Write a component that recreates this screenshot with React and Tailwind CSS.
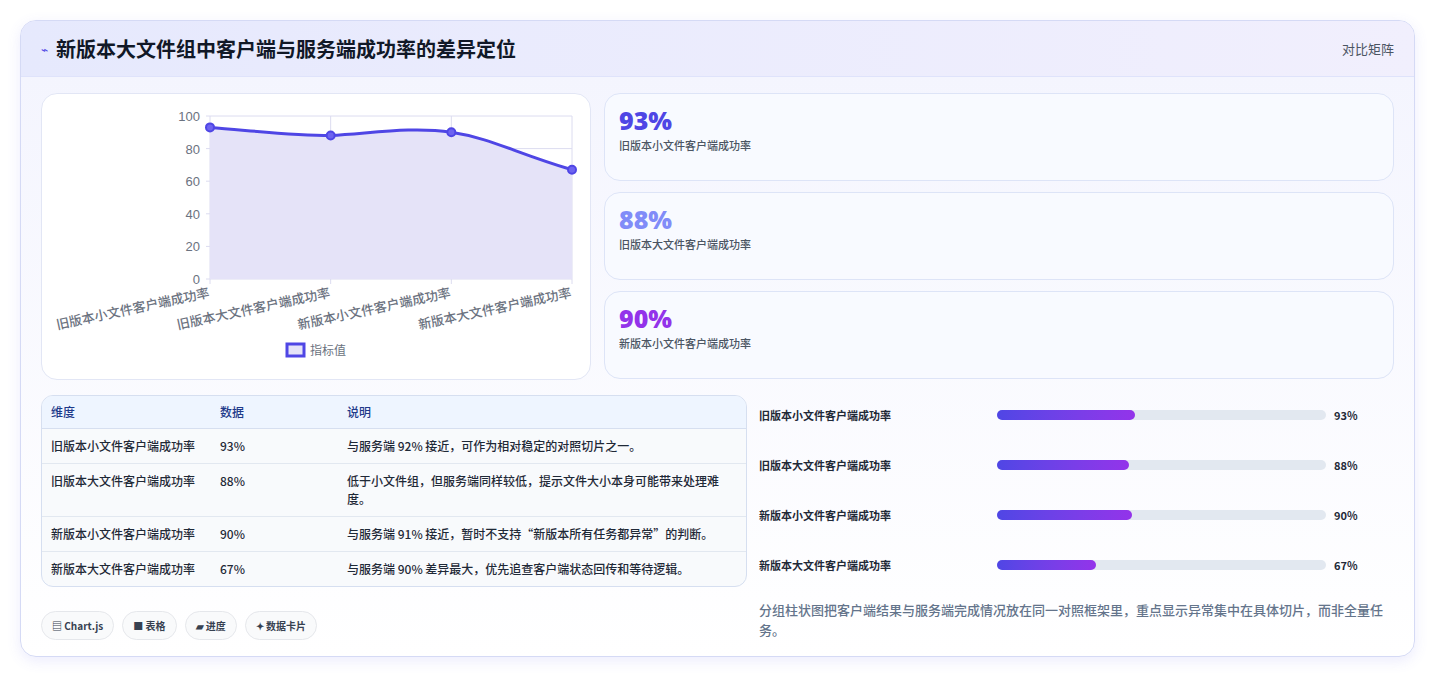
import React from "react";

const items = [
  { name: "旧版本小文件客户端成功率", v: 93, w: 42, color: "text-[#4f46e5]", note: "与服务端 92% 接近，可作为相对稳定的对照切片之一。" },
  { name: "旧版本大文件客户端成功率", v: 88, w: 40, color: "text-[#818cf8]", note: "低于小文件组，但服务端同样较低，提示文件大小本身可能带来处理难度。" },
  { name: "新版本小文件客户端成功率", v: 90, w: 41, color: "text-[#9333ea]", note: "与服务端 91% 接近，暂时不支持“新版本所有任务都异常”的判断。" },
  { name: "新版本大文件客户端成功率", v: 67, w: 30, color: "", note: "与服务端 90% 差异最大，优先追查客户端状态回传和等待逻辑。" },
];

function Chart() {
  const x0 = 168, x1 = 530, y0 = 22, y1 = 185;
  const xs = [0, 1, 2, 3].map((i) => x0 + ((x1 - x0) * i) / 3);
  const y = (v) => y1 - ((y1 - y0) * v) / 100;
  const pts = items.map((it, i) => [xs[i], y(it.v)]);
  const line = `M${pts[0][0]},${pts[0][1]} C${pts[0][0] + 40},${pts[0][1] + 3} ${pts[1][0] - 40},${pts[1][1]} ${pts[1][0]},${pts[1][1]} C${pts[1][0] + 40},${pts[1][1] - 2} ${pts[2][0] - 40},${pts[2][1] - 6} ${pts[2][0]},${pts[2][1]} C${pts[2][0] + 40},${pts[2][1] + 6} ${pts[3][0] - 60},${pts[3][1] - 18} ${pts[3][0]},${pts[3][1]}`;
  return (
    <svg width="549" height="286" className="block" style={{ fontFamily: "'Liberation Sans','Noto Sans CJK SC',sans-serif" }}>
      {[0, 20, 40, 60, 80, 100].map((t) => (
        <g key={t}>
          <line x1={x0 - 4} x2={x1} y1={y(t)} y2={y(t)} stroke="#dcdcf0" />
          <text x={x0 - 10} y={y(t) + 5} textAnchor="end" fontSize="13" fill="#6b7280">{t}</text>
        </g>
      ))}
      {xs.map((x, i) => (
        <line key={i} x1={x} x2={x} y1={y0} y2={y1 + 5} stroke="#dcdcf0" />
      ))}
      <path d={`${line} L${x1},${y1} L${x0},${y1} Z`} fill="#e5e3f8" />
      <path d={line} fill="none" stroke="#4f46e5" strokeWidth="3" />
      {pts.map((p, i) => (
        <circle key={i} cx={p[0]} cy={p[1]} r="4" fill="#6d63f0" stroke="#4f46e5" strokeWidth="2" />
      ))}
      {items.map((it, i) => (
        <text key={i} x={xs[i]} y={y1 + 18} textAnchor="end" fontSize="13" fontWeight="500" fill="#6b7280" transform={`rotate(-12 ${xs[i]} ${y1 + 18})`}>{it.name}</text>
      ))}
      <rect x="245" y="250" width="17" height="12" fill="#e5e3f8" stroke="#4f46e5" strokeWidth="3" />
      <text x="268" y="261" fontSize="12" fill="#6b7280">指标值</text>
    </svg>
  );
}

export default function App() {
  return (
    <div className="min-h-[679px] bg-white p-5 pt-5" style={{ fontFamily: "'Noto Sans CJK SC','Liberation Sans',sans-serif" }}>
      <div className="rounded-2xl border border-[#d5daf5] bg-gradient-to-b from-[#f3f4fe] to-white shadow-[0_4px_14px_rgba(99,102,241,0.12)] overflow-hidden">
        <div className="flex items-center justify-between h-[56px] px-5 bg-gradient-to-r from-[#e6e9fd] to-[#f1effd] border-b border-[#dfe3fb]">
          <div className="flex items-center gap-2">
            <span className="text-[#4f46e5] text-xs">⌁</span>
            <h1 className="text-[20px] font-bold text-[#111827]">新版本大文件组中客户端与服务端成功率的差异定位</h1>
          </div>
          <span className="text-[13px] text-[#4b5563]">对比矩阵</span>
        </div>
        <div className="p-5 pt-4 pb-4">
          <div className="flex gap-[13px]">
            <div className="w-[550px] h-[287px] rounded-2xl border border-[#e2e6f5] bg-white shrink-0">
              <Chart />
            </div>
            <div className="flex-1 flex flex-col gap-[11px]">
              {items.slice(0, 3).map((it) => (
                <div key={it.name} className="h-[88px] rounded-2xl border border-[#dde4f7] bg-[#f8faff] px-[14px] pt-[10px]">
                  <div className={`text-[25px] font-extrabold leading-[32px] ${it.color}`} style={{ fontFamily: "'Open Sans','Liberation Sans',sans-serif" }}>{it.v}%</div>
                  <div className="text-[11px] font-medium text-[#4b5563] mt-[1px]">{it.name}</div>
                </div>
              ))}
            </div>
          </div>
          <div className="flex gap-3 mt-[15px]">
            <div className="w-[706px] shrink-0">
              <div className="rounded-xl border border-[#d6dff0] overflow-hidden bg-[#f8fafc] text-[12px] font-medium text-[#1f2937]">
                <div className="flex h-[33px] items-center bg-[#eef5ff] text-[#1e3a8a] border-b border-[#d6dff0]">
                  <div className="w-[178px] pl-[9px]">维度</div>
                  <div className="w-[127px]">数据</div>
                  <div className="flex-1">说明</div>
                </div>
                {items.map((it, i) => (
                  <div key={it.name} className={`flex py-[8px] leading-[18px] ${i < 3 ? "border-b border-[#e2e8f0]" : ""}`}>
                    <div className="w-[178px] pl-[9px]">{it.name}</div>
                    <div className="w-[127px]">{it.v}%</div>
                    <div className="flex-1 pr-4">{it.note}</div>
                  </div>
                ))}
              </div>
              <div className="flex gap-2 mt-[24px] text-[10px] font-semibold text-[#374151]">
                <span className="rounded-full border border-[#e5e7eb] bg-[#f9fafb] px-2.5 py-[6px]">▤ Chart.js</span>
                <span className="rounded-full border border-[#e5e7eb] bg-[#f9fafb] px-2.5 py-[6px]">■ 表格</span>
                <span className="rounded-full border border-[#e5e7eb] bg-[#f9fafb] px-2.5 py-[6px]">▰ 进度</span>
                <span className="rounded-full border border-[#e5e7eb] bg-[#f9fafb] px-2.5 py-[6px]">✦ 数据卡片</span>
              </div>
            </div>
            <div className="flex-1 -mt-[5px]">
              <div className="flex flex-col">
                {items.map((it) => (
                  <div key={it.name} className="flex items-center h-[50px] text-[11px] font-semibold text-[#1f2937]">
                    <div className="w-[238px]">{it.name}</div>
                    <div className="w-[329px] h-[10px] rounded-full bg-[#e2e8f0]">
                      <div className="h-full rounded-full bg-gradient-to-r from-[#4f46e5] to-[#9333ea]" style={{ width: `${it.w}%` }} />
                    </div>
                    <div className="ml-2">{it.v}%</div>
                  </div>
                ))}
              </div>
              <p className="mt-[10px] text-[13px] font-medium leading-[20px] text-[#64748b] pr-2">分组柱状图把客户端结果与服务端完成情况放在同一对照框架里，重点显示异常集中在具体切片，而非全量任务。</p>
            </div>
          </div>
        </div>
      </div>
    </div>
  );
}
